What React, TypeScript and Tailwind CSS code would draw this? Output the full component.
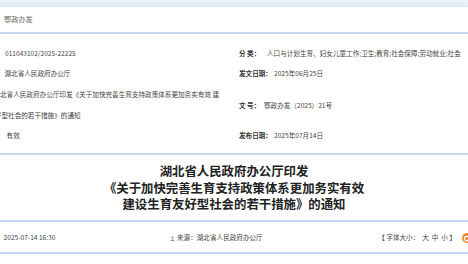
const cjk = "font-['Noto_Sans_CJK_SC','Noto_Sans',sans-serif]";

function Label({ text, width }: { text: string; width: string }) {
  return <span className={`inline-block shrink-0 font-bold text-[#333] ${width}`}>{text}</span>;
}

function SourceIcon() {
  return (
    <svg width="5" height="5" viewBox="0 0 10 10" className="mr-[2px]">
      <circle cx="5" cy="3" r="2.2" fill="#8a8f99" />
      <path d="M1 10 C1 6 9 6 9 10 Z" fill="#8a8f99" />
    </svg>
  );
}

function ShareIcon() {
  return (
    <svg width="10" height="10" viewBox="0 0 10 10" className="shrink-0">
      <circle cx="5" cy="5" r="5" fill="#f08a2c" />
      <circle cx="4.6" cy="5.6" r="2.2" fill="none" stroke="#fff" strokeWidth="1.2" />
      <circle cx="7.4" cy="2.6" r="0.9" fill="#fff" />
    </svg>
  );
}

export default function App() {
  return (
    <div className={`w-[468px] h-[264px] overflow-hidden bg-white ${cjk}`}>
      <div className="h-[7px] bg-gradient-to-b from-[#edf5fd] to-[#dde9f6]" />
      <div className="flex h-[27px] items-center border-b-2 border-[#c6d8f2] pl-[4px] text-[7.2px] text-[#666]">
        鄂政办发
      </div>

      <div className="flex h-[119px] pt-[9px] text-[6.6px] leading-[10px] text-[#444]">
        <div className="w-[234px] shrink-0 overflow-hidden">
          <div className="flex h-[20px] items-center pl-[5px]">011043102/2025-22225</div>
          <div className="flex h-[20px] items-center pl-[4.5px]">湖北省人民政府办公厅</div>
          <div className="flex h-[42px] flex-col justify-center gap-[11px] whitespace-nowrap">
            <span className="ml-[-6.6px]">湖北省人民政府办公厅印发《关于加快完善生育支持政策体系更加务实有效 建</span>
            <span className="ml-[-31.5px]">设生育友好型社会的若干措施》的通知</span>
          </div>
          <div className="flex h-[20px] items-center whitespace-nowrap">
            <span className="ml-[-5px] mr-[5px]">：</span>
            <span>有效</span>
          </div>
        </div>
        <div className="min-w-0 flex-1 overflow-hidden whitespace-nowrap pl-[5px]">
          <div className="flex h-[20px] items-center">
            <Label text="分 类：" width="w-[28px]" />
            <span>人口与计划生育、妇女儿童工作;卫生;教育;社会保障;劳动就业;社会</span>
          </div>
          <div className="flex h-[20px] items-center">
            <Label text="发文日期：" width="w-[35px]" />
            <span>2025年06月25日</span>
          </div>
          <div className="flex h-[42px] items-center pt-[2px]">
            <Label text="文 号：" width="w-[25px]" />
            <span>鄂政办发（2025）21号</span>
          </div>
          <div className="flex h-[20px] items-center">
            <Label text="发布日期：" width="w-[35px]" />
            <span>2025年07月14日</span>
          </div>
        </div>
      </div>

      <div className="border-t-2 border-[#c6d8f2] pt-[8px] pb-[7px] text-center text-[12.4px] font-bold leading-[16.5px] text-[#222]">
        <div>湖北省人民政府办公厅印发</div>
        <div>《关于加快完善生育支持政策体系更加务实有效</div>
        <div>建设生育友好型社会的若干措施》的通知</div>
      </div>

      <div className="flex h-[34px] items-center border-y-2 border-[#c6d8f2] pt-[3px] text-[6.6px] text-[#444] whitespace-nowrap">
        <span className="ml-[-3px] w-[173px] shrink-0">：2025-07-14 16:30</span>
        <SourceIcon />
        <span>来源：湖北省人民政府办公厅</span>
        <span className="ml-auto mr-[6px]">【 字体大小：&nbsp; 大&nbsp; 中&nbsp; 小 】</span>
        <div className="mr-[-4px]">
          <ShareIcon />
        </div>
      </div>
    </div>
  );
}
